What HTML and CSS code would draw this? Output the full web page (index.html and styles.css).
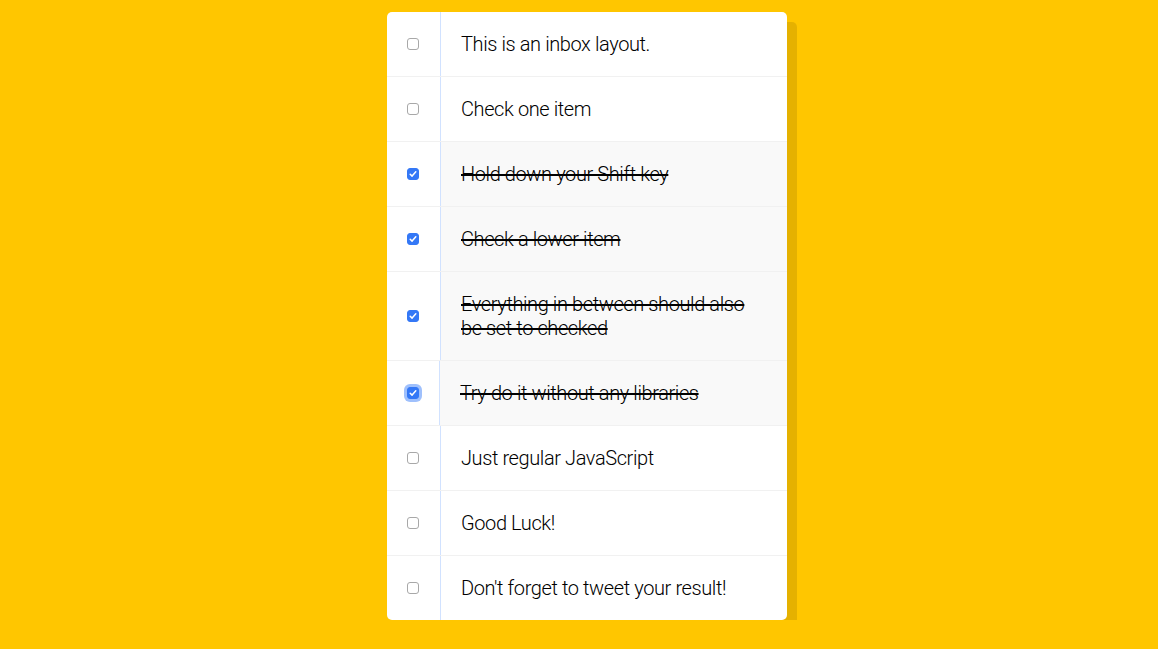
FILE: index.html
```html
<!DOCTYPE html>
<html lang="en">
<head>
<meta charset="utf-8">
<title>Hold Shift to Check Multiple Checkboxes!</title>
<link rel="stylesheet" href="styles.css">
</head>
<body>
<div class="inbox">
  <div class="item"><input type="checkbox"><p>This is an inbox layout.</p></div>
  <div class="item"><input type="checkbox"><p>Check one item</p></div>
  <div class="item"><input type="checkbox" checked><p>Hold down your Shift key</p></div>
  <div class="item"><input type="checkbox" checked><p>Check a lower item</p></div>
  <div class="item"><input type="checkbox" checked><p>Everything in between should also be set to checked</p></div>
  <div class="item"><input type="checkbox" class="focused" checked><p>Try do it without any libraries</p></div>
  <div class="item"><input type="checkbox"><p>Just regular JavaScript</p></div>
  <div class="item"><input type="checkbox"><p>Good Luck!</p></div>
  <div class="item"><input type="checkbox"><p>Don't forget to tweet your result!</p></div>
</div>
</body>
</html>
```
FILE: styles.css
```css
html {
  background: #ffc600;
}
body {
  margin: 0;
  padding-top: 12px;
  font-family: Roboto, "Liberation Sans", sans-serif;
  font-size: 20px;
  font-weight: 300;
}
.inbox {
  width: 400px;
  margin: 0 auto 0 387px;
  background: #fff;
  border-radius: 5px;
  box-shadow: 10px 10px 0 rgba(0, 0, 0, 0.1);
}
.item {
  display: flex;
  align-items: center;
  border-bottom: 1px solid #f1f1f1;
}
.item:last-child {
  border-bottom: 0;
}
.item input[type="checkbox"] {
  appearance: none;
  -webkit-appearance: none;
  width: 12px;
  height: 12px;
  margin: 20px 21px 20px 20px;
  box-sizing: border-box;
  border: 1px solid #a8a8a8;
  border-radius: 3px;
  background: #fff;
  flex: none;
}
.item input[type="checkbox"]:checked {
  border-color: #3478f6;
  background: #3478f6 url("data:image/svg+xml;utf8,<svg xmlns='http://www.w3.org/2000/svg' viewBox='0 0 12 12'><path d='M3.2 6.2 L5.1 8.1 L8.8 3.8' fill='none' stroke='white' stroke-width='1.5' stroke-linecap='round' stroke-linejoin='round'/></svg>") center / 12px 12px no-repeat;
}
.item input.focused {
  box-shadow: 0 0 0 3px rgba(80, 140, 250, 0.55);
  margin-right: 20px;
}
.item p {
  margin: 0;
  padding: 20px;
  flex: 1;
  line-height: 24px;
  color: #000;
  letter-spacing: -0.4px;
  border-left: 1px solid #d1e2ff;
}
.item input:checked + p {
  background: #f9f9f9;
  text-decoration: line-through;
  text-decoration-thickness: 2px;
}
.inbox .item:first-child p {
  border-top-right-radius: 5px;
}
.inbox .item:last-child p {
  border-bottom-right-radius: 5px;
}
```
